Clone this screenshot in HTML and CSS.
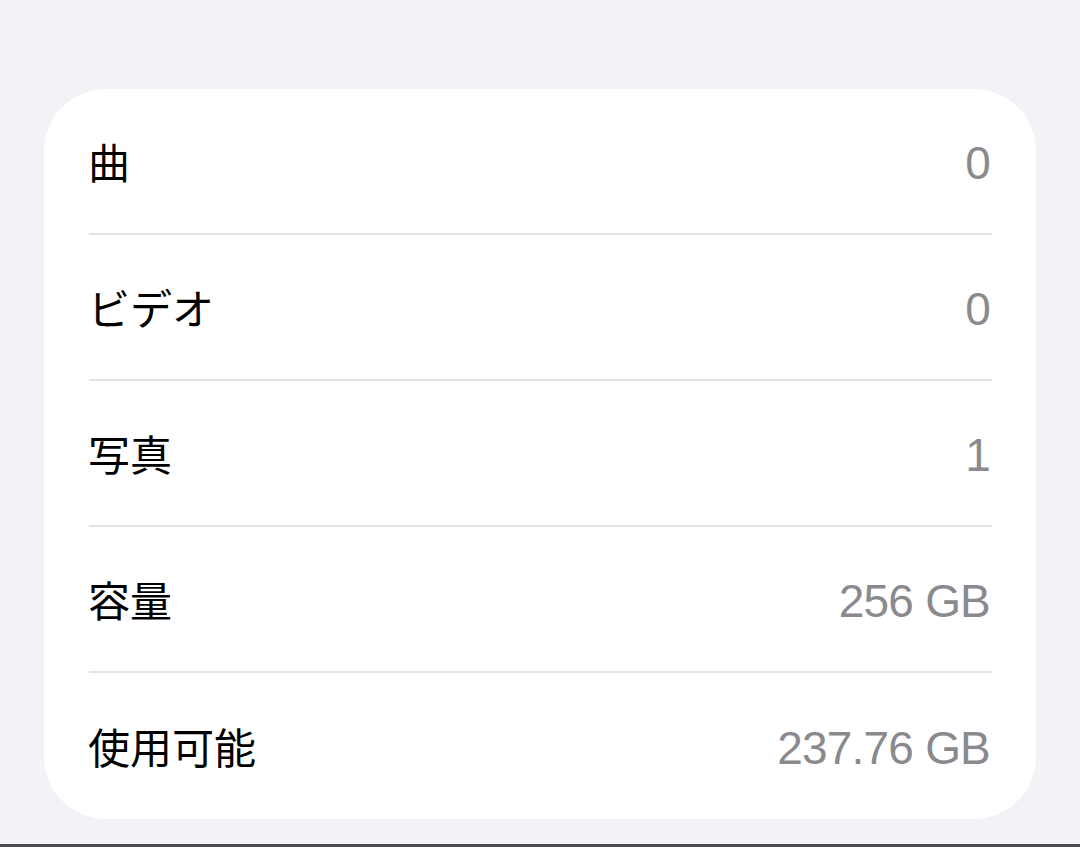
FILE: index.html
```html
<!DOCTYPE html>
<html lang="ja">
<head>
  <meta charset="UTF-8" />
  <meta name="viewport" content="width=device-width, initial-scale=1.0" />
  <title>情報</title>
  <link rel="stylesheet" href="styles.css">
</head>
<body>
  <div class="page">
    <div class="group">
      <div class="row">
        <span class="label">曲</span>
        <span class="value">0</span>
      </div>
      <div class="row">
        <span class="label">ビデオ</span>
        <span class="value">0</span>
      </div>
      <div class="row">
        <span class="label">写真</span>
        <span class="value">1</span>
      </div>
      <div class="row">
        <span class="label">容量</span>
        <span class="value">256 GB</span>
      </div>
      <div class="row">
        <span class="label">使用可能</span>
        <span class="value">237.76 GB</span>
      </div>
    </div>
  </div>
  <div class="home-edge"></div>
</body>
</html>
```

FILE: styles.css
```css
html, body {
  height: 100%;
}
body {
  margin: 0;
  background: #f2f2f7;
  font-family: "Liberation Sans", "Noto Sans CJK JP", sans-serif;
  display: flex;
  flex-direction: column;
}
.page {
  flex: 1;
  padding: 89px 44px 0 44px;
}
.group {
  background: #fff;
  border-radius: 62px;
  padding: 0 44px 0 45px;
}
.row {
  display: flex;
  justify-content: space-between;
  align-items: center;
  height: 144px;
  border-bottom: 2px solid #e3e3e7;
}
.row:last-child {
  border-bottom: none;
  height: 146px;
}
.label {
  font-family: "Noto Sans CJK JP", sans-serif;
  font-size: 42px;
  color: #000;
  line-height: 1;
  margin-left: -1px;
}
.value {
  font-size: 46px;
  letter-spacing: -0.8px;
  color: #8a8a8e;
  line-height: 1;
  padding-right: 2px;
  margin-top: 3px;
}
.home-edge {
  height: 3px;
  background: #4a4a50;
}
```
